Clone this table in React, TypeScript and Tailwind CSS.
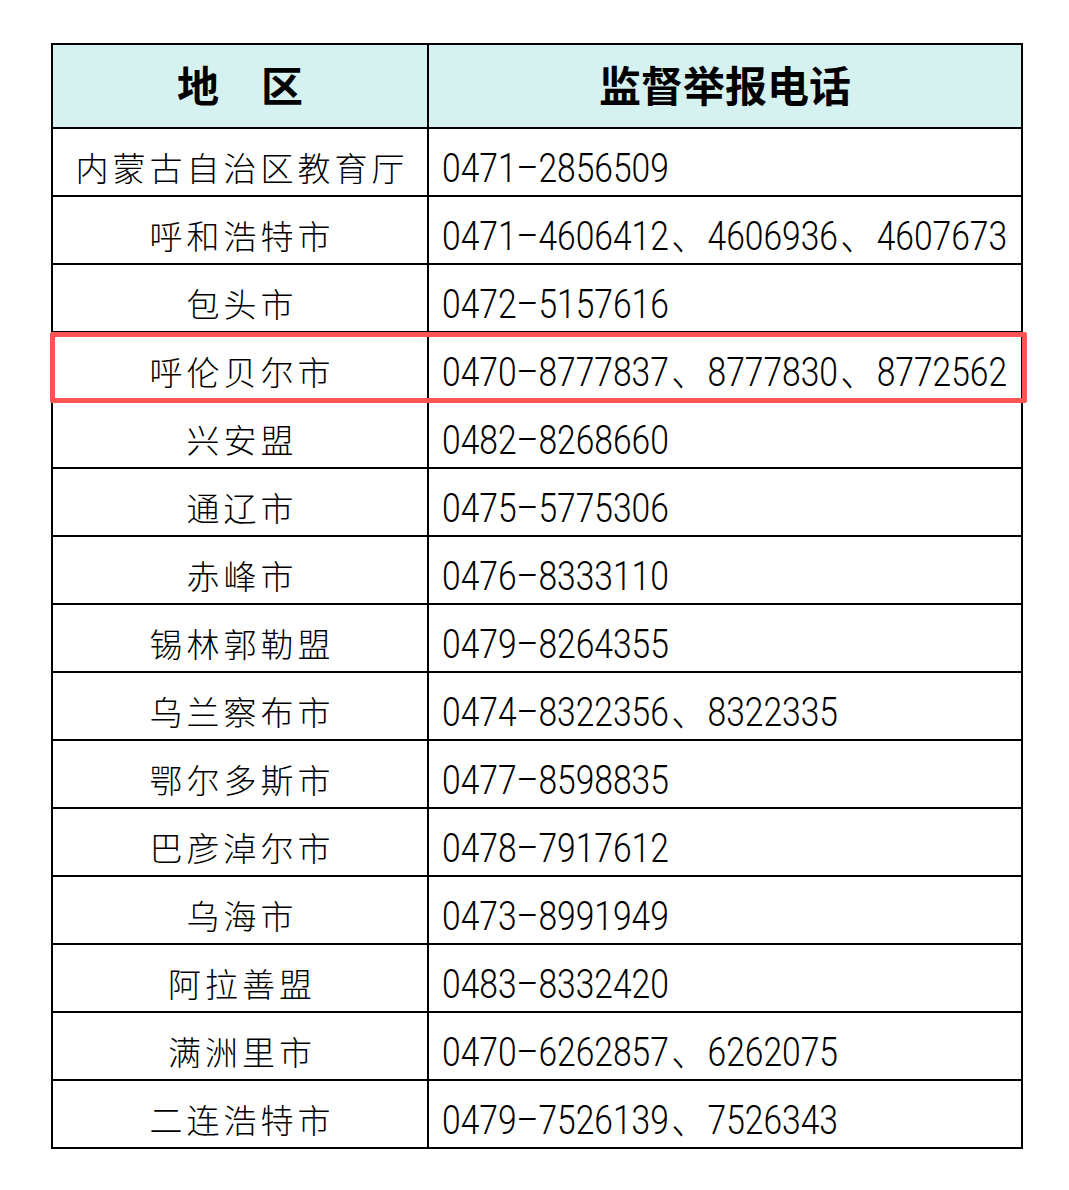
import React from "react";

const rows: [string, string][] = [
  ["内蒙古自治区教育厅", "0471–2856509"],
  ["呼和浩特市", "0471–4606412、4606936、4607673"],
  ["包头市", "0472–5157616"],
  ["呼伦贝尔市", "0470–8777837、8777830、8772562"],
  ["兴安盟", "0482–8268660"],
  ["通辽市", "0475–5775306"],
  ["赤峰市", "0476–8333110"],
  ["锡林郭勒盟", "0479–8264355"],
  ["乌兰察布市", "0474–8322356、8322335"],
  ["鄂尔多斯市", "0477–8598835"],
  ["巴彦淖尔市", "0478–7917612"],
  ["乌海市", "0473–8991949"],
  ["阿拉善盟", "0483–8332420"],
  ["满洲里市", "0470–6262857、6262075"],
  ["二连浩特市", "0479–7526139、7526343"],
];

const cjk = { fontFamily: '"Noto Sans CJK SC", sans-serif' };
const num = { fontFamily: 'Roboto, "Liberation Sans", "Noto Sans CJK SC", sans-serif' };

function Phone({ text }: { text: string }) {
  const parts = text.split("、");
  return (
    <>
      {parts.map((p, i) => (
        <React.Fragment key={i}>
          {i > 0 && <span className="px-[3px]">、</span>}
          {p}
        </React.Fragment>
      ))}
    </>
  );
}

export default function App() {
  return (
    <div className="min-h-[1190px] w-[1069px] bg-white pl-[51px] pt-[43px]">
      <div className="relative w-[972px]">
        <div className="grid grid-cols-[376px_594px] border-l-2 border-t-2 border-black">
          <div
            className="flex h-[84px] items-center justify-center border-b-2 border-r-2 border-black bg-[#d5f2f0] pb-[6px] text-[42px] font-bold text-black"
            style={cjk}
          >
            地　区
          </div>
          <div
            className="flex h-[84px] items-center justify-center border-b-2 border-r-2 border-black bg-[#d5f2f0] pb-[6px] text-[42px] font-bold text-black"
            style={cjk}
          >
            监督举报电话
          </div>
          {rows.map(([region, phone]) => (
            <React.Fragment key={region}>
              <div
                className="flex h-[68px] items-center justify-center border-b-2 border-r-2 border-black pl-[4px] pt-[12px] text-[33px] font-light tracking-[4px] text-black"
                style={cjk}
              >
                {region}
              </div>
              <div className="flex h-[68px] items-center overflow-visible whitespace-nowrap border-b-2 border-r-2 border-black pl-[13px] pt-[14px] text-black">
                <span
                  className="inline-block origin-left scale-x-[0.84] text-[40px] font-light"
                  style={num}
                >
                  <Phone text={phone} />
                </span>
              </div>
            </React.Fragment>
          ))}
        </div>
        <div className="pointer-events-none absolute left-[-1px] top-[289px] h-[71px] w-[977px] rounded-[2px] border-[5px] border-[#fb5454]" />
      </div>
    </div>
  );
}
